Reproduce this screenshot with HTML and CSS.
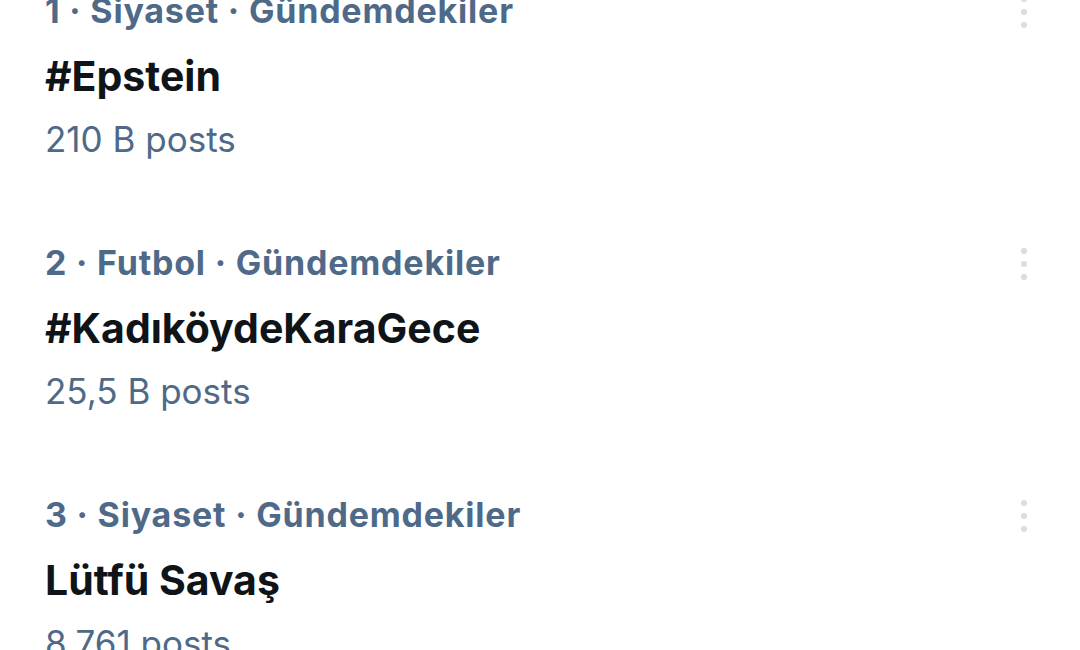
FILE: index.html
```html
<!DOCTYPE html>
<html lang="tr">
<head>
<meta charset="utf-8">
<link rel="stylesheet" href="styles.css">
</head>
<body>
<div class="list">
  <div class="trend">
    <div class="head">
      <span class="meta">1 · Siyaset · Gündemdekiler</span>
      <span class="more"><i></i><i></i><i></i></span>
    </div>
    <div class="title">#Epstein</div>
    <div class="count">210 B posts</div>
  </div>
  <div class="trend">
    <div class="head">
      <span class="meta">2 · Futbol · Gündemdekiler</span>
      <span class="more"><i></i><i></i><i></i></span>
    </div>
    <div class="title">#KadıköydeKaraGece</div>
    <div class="count">25,5 B posts</div>
  </div>
  <div class="trend">
    <div class="head">
      <span class="meta">3 · Siyaset · Gündemdekiler</span>
      <span class="more"><i></i><i></i><i></i></span>
    </div>
    <div class="title">Lütfü Savaş</div>
    <div class="count">8.761 posts</div>
  </div>
</div>
</body>
</html>
```

FILE: styles.css
```css
html, body {
  margin: 0;
  padding: 0;
  background: #ffffff;
}
body {
  font-family: Inter, "Liberation Sans", sans-serif;
  width: 1080px;
  height: 650px;
  overflow: hidden;
}
.list {
  display: flex;
  flex-direction: column;
  padding: 0 53px 0 45px;
}
.trend {
  height: 252px;
  display: flex;
  flex-direction: column;
}
.head {
  display: flex;
  align-items: center;
  justify-content: space-between;
  height: 22px;
}
.meta {
  font-size: 34px;
  line-height: 22px;
  font-weight: 700;
  letter-spacing: 0.8px;
  color: #4e6a88;
  white-space: nowrap;
}
.more {
  display: flex;
  flex-direction: column;
  gap: 7px;
  width: 6px;
  margin-top: 2px;
}
.more i {
  display: block;
  width: 6px;
  height: 6px;
  border-radius: 50%;
  background: #d6dde5;
}
.title {
  margin-top: 29px;
  font-size: 41px;
  line-height: 50px;
  font-weight: 700;
  color: #0f1419;
}
.count {
  margin-top: 16px;
  font-size: 35px;
  line-height: 44px;
  font-weight: 400;
  color: #4e6a88;
}
```
